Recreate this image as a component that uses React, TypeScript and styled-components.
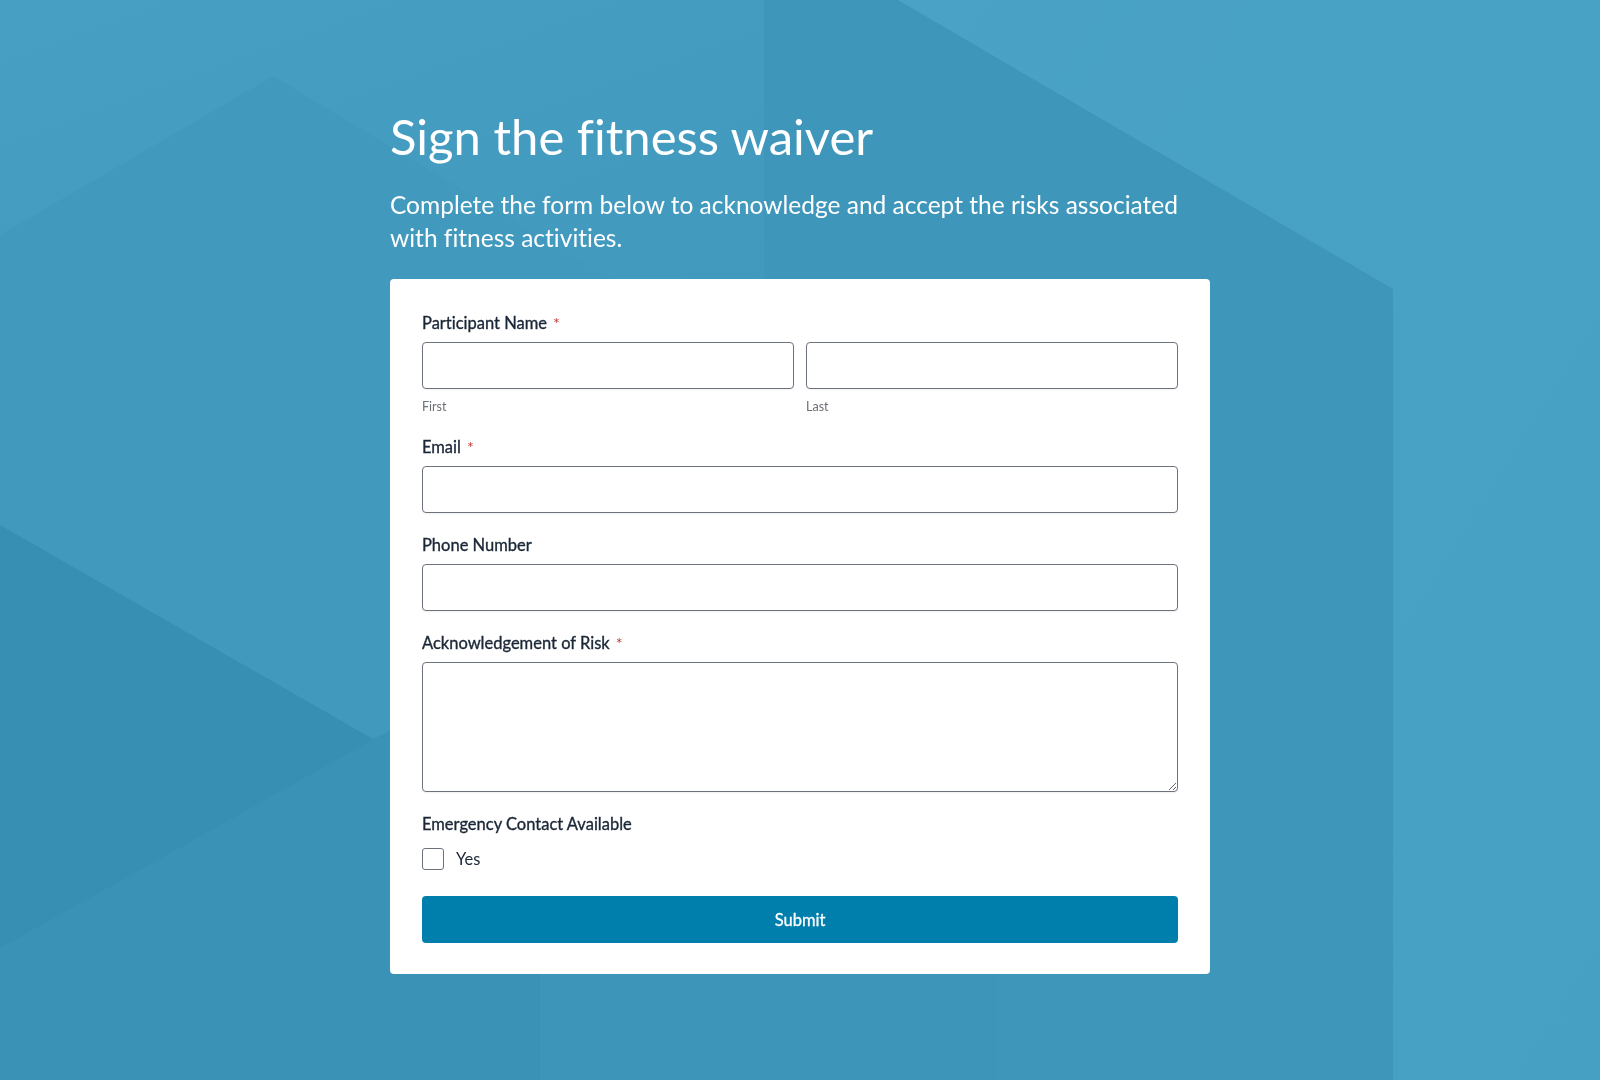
import React from "react";
import styled, { createGlobalStyle } from "styled-components";

const GlobalStyle = createGlobalStyle`
  html, body { margin: 0; padding: 0; }
  body {
    background: #4199be;
    font-family: Lato, "Noto Sans", sans-serif;
    font-variant-ligatures: none;
    -webkit-font-smoothing: antialiased;
  }
  * { box-sizing: border-box; }
`;

const Backdrop = styled.svg`
  position: fixed;
  inset: 0;
  width: 100%;
  height: 100%;
  z-index: 0;
  pointer-events: none;
`;

const Page = styled.main`
  position: relative;
  z-index: 1;
  min-height: 1080px;
  display: flex;
  justify-content: center;
  padding-top: 106px;
`;

const Column = styled.div`
  width: 820px;
  display: flex;
  flex-direction: column;
`;

const Title = styled.h1`
  margin: 0;
  font-family: Lato, sans-serif;
  font-weight: 400;
  font-size: 49px;
  line-height: 60px;
  color: #ffffff;
  font-variant-ligatures: none;
`;

const Subtitle = styled.p`
  margin: 22px 0 25px;
  font-family: Lato, sans-serif;
  font-weight: 400;
  font-size: 24.5px;
  line-height: 33px;
  color: #ffffff;
`;

const Card = styled.form`
  background: #ffffff;
  border-radius: 4px;
  padding: 32px 32px 31px;
  display: flex;
  flex-direction: column;
  gap: 20px;
`;

const Field = styled.div`
  display: flex;
  flex-direction: column;
`;

const Label = styled.label`
  display: flex;
  align-items: baseline;
  font-size: 16.5px;
  font-weight: 400;
  -webkit-text-stroke: 0.35px #1b2737;
  line-height: 24px;
  color: #1b2737;
  margin-bottom: 7px;
`;

const Required = styled.span`
  color: #c23934;
  -webkit-text-stroke: 0;
  font-size: 16px;
  font-weight: 400;
  margin-left: 6px;
`;

const Pair = styled.div`
  display: grid;
  grid-template-columns: 1fr 1fr;
  gap: 12px;
`;

const Sub = styled.div`
  display: flex;
  flex-direction: column;
`;

const Hint = styled.span`
  margin-top: 10px;
  font-size: 12.5px;
  line-height: 16px;
  color: #6b6f76;
`;

const TextInput = styled.input`
  width: 100%;
  height: 47px;
  border: 1px solid #6d737d;
  border-radius: 4px;
  background: #fff;
  box-shadow: 0 1px 2px rgba(0, 0, 0, 0.06);
  font-family: Lato, sans-serif;
  font-size: 16px;
  padding: 0 12px;
  outline: none;
`;

const TextArea = styled.textarea`
  width: 100%;
  height: 130px;
  border: 1px solid #6d737d;
  border-radius: 4px;
  background: #fff;
  box-shadow: 0 1px 2px rgba(0, 0, 0, 0.06);
  font-family: Lato, sans-serif;
  font-size: 16px;
  padding: 10px 12px;
  resize: vertical;
  outline: none;
  display: block;
`;

const CheckRow = styled.label`
  display: flex;
  align-items: center;
  height: 30px;
  margin-top: 1px;
  gap: 12px;
  font-size: 16.5px;
  color: #1b2737;
  cursor: pointer;
`;

const Box = styled.input`
  appearance: none;
  margin: 0;
  width: 22px;
  height: 22px;
  border: 1px solid #6d737d;
  border-radius: 3px;
  background: #fff;
`;

const Submit = styled.button`
  margin-top: 2px;
  height: 47px;
  width: 100%;
  border: none;
  border-radius: 4px;
  background: #007fad;
  color: #ffffff;
  font-family: Lato, sans-serif;
  font-size: 16.5px;
  font-weight: 400;
  -webkit-text-stroke: 0.3px #ffffff;
  cursor: pointer;
`;

export default function App() {
  return (
    <>
      <GlobalStyle />
      <Backdrop viewBox="0 0 1600 1080" preserveAspectRatio="none" aria-hidden="true">
        <defs>
          <linearGradient id="tl" x1="0" y1="0" x2="1" y2="1">
            <stop offset="0" stopColor="#479fc3" />
            <stop offset="1" stopColor="#4199be" />
          </linearGradient>
          <linearGradient id="tr" x1="0" y1="0" x2="1" y2="1">
            <stop offset="0" stopColor="#4aa3c7" />
            <stop offset="1" stopColor="#45a0c4" />
          </linearGradient>
        </defs>
        <rect x="0" y="0" width="1600" height="1080" fill="#4199be" />
        <polygon points="0,0 764,0 764,279 612,279 273,76 0,235" fill="url(#tl)" />
        <polygon points="764,0 898,0 1393,289 1393,1080 998,1080 998,973 764,973" fill="#3e96bb" />
        <polygon points="898,0 1600,0 1600,1080 1393,1080 1393,289" fill="url(#tr)" />
        <polygon points="0,525 540,835 540,1080 0,1080" fill="#378fb4" />
        <polygon points="0,948 390,730 540,800 540,1080 0,1080" fill="#3a92b7" />
        <polygon points="540,973 998,973 998,1080 540,1080" fill="#3d96ba" />
      </Backdrop>
      <Page>
        <Column>
          <Title>Sign the fitness waiver</Title>
          <Subtitle>
            Complete the form below to acknowledge and accept the risks associated with fitness
            activities.
          </Subtitle>
          <Card onSubmit={(e) => e.preventDefault()}>
            <Field>
              <Label>
                Participant Name<Required>*</Required>
              </Label>
              <Pair>
                <Sub>
                  <TextInput type="text" aria-label="First" />
                  <Hint>First</Hint>
                </Sub>
                <Sub>
                  <TextInput type="text" aria-label="Last" />
                  <Hint>Last</Hint>
                </Sub>
              </Pair>
            </Field>
            <Field>
              <Label>
                Email<Required>*</Required>
              </Label>
              <TextInput type="email" />
            </Field>
            <Field>
              <Label>Phone Number</Label>
              <TextInput type="tel" />
            </Field>
            <Field>
              <Label>
                Acknowledgement of Risk<Required>*</Required>
              </Label>
              <TextArea />
            </Field>
            <Field>
              <Label>Emergency Contact Available</Label>
              <CheckRow>
                <Box type="checkbox" />
                Yes
              </CheckRow>
            </Field>
            <Submit type="submit">Submit</Submit>
          </Card>
        </Column>
      </Page>
    </>
  );
}
